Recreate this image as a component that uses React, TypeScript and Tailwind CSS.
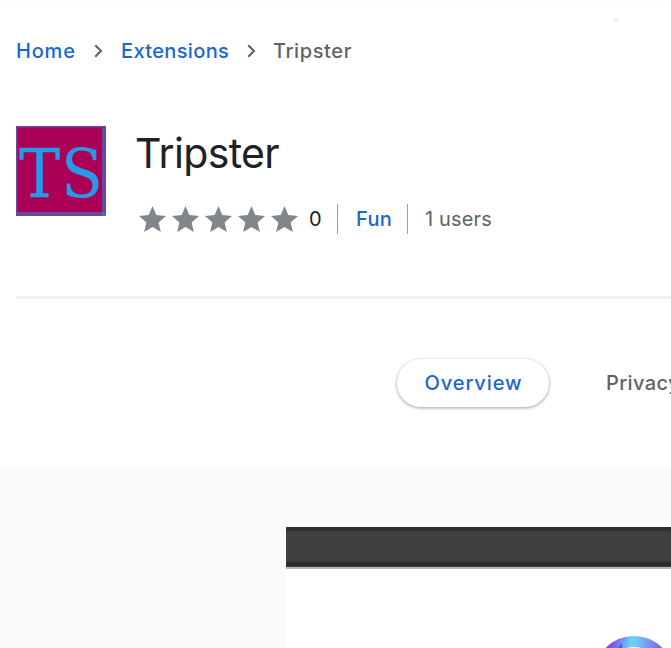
import React from "react";

const Chevron = () => (
  <svg className="h-[14px] w-[9px] shrink-0" viewBox="0 0 9 14" fill="none" stroke="#5f6368" strokeWidth="2.1">
    <path d="M1.2 1.2 7 7l-5.8 5.8" />
  </svg>
);

const Star = () => (
  <svg className="h-[26px] w-[27px] shrink-0" viewBox="2 2 20 19" preserveAspectRatio="none" fill="#80868b">
    <path d="M12 17.27L18.18 21l-1.64-7.03L22 9.24l-7.19-.61L12 2 9.19 8.63 2 9.24l5.46 4.73L5.82 21z" />
  </svg>
);

function Logo() {
  return (
    <svg className="h-[90px] w-[90px] shrink-0" viewBox="0 0 90 90">
      <rect width="90" height="90" fill="#664aa0" />
      <rect x="1.5" y="1.5" width="84.5" height="84.5" fill="#aa0055" />
      <rect x="86" y="86.5" width="4" height="3.5" fill="#4173c4" />
      <g fill="#2898e8" stroke="#2898e8" fontFamily="DejaVu Serif, serif" fontSize="68">
        <text x="3" y="71" textLength="41" lengthAdjust="spacingAndGlyphs" strokeWidth="0.5">T</text>
        <text x="45" y="71" textLength="42" lengthAdjust="spacingAndGlyphs" strokeWidth="0">S</text>
      </g>
    </svg>
  );
}

export default function App() {
  return (
    <div className="h-[648px] w-full overflow-hidden bg-white font-['Inter',sans-serif] text-[20px] whitespace-nowrap">
      <div className="flex h-[40px] justify-end border-t-2 border-[#fdfdfd] pt-4 pr-[53px]">
        <span className="h-1 w-1 bg-[#efefef]" />
      </div>
      <nav className="flex h-[22px] items-center pl-4 font-medium text-[#1967d2]">
        <span className="w-[78px] tracking-[0.8px]">Home</span>
        <Chevron />
        <span className="ml-[18px] w-[126px] tracking-[0.35px]">Extensions</span>
        <Chevron />
        <span className="ml-[17px] tracking-[0.6px] text-[#5f6368]">Tripster</span>
      </nav>
      <header className="mt-16 flex h-[170px] pl-4">
        <Logo />
        <div className="ml-[29px]">
          <h1 className="flex h-[54px] items-center pt-px text-[41px] tracking-[-0.65px] text-[#202124]">Tripster</h1>
          <div className="mt-6 flex h-[30px] items-center">
            <div className="flex gap-[6px] pl-1">
              <Star /><Star /><Star /><Star /><Star />
            </div>
            <span className="ml-[11px] w-[28px] text-[#202124]">0</span>
            <span className="flex h-[30px] w-[70px] items-center border-l border-[#9aa0a6] pl-[18px] font-medium tracking-[0.3px] text-[#1967d2]">Fun</span>
            <span className="flex h-[30px] items-center border-l border-[#9aa0a6] pl-[17px] tracking-[0.15px] text-[#5f6368]">1 users</span>
          </div>
        </div>
      </header>
      <div className="ml-4 h-[3px] bg-[#f1f3f4]" />
      <div className="flex h-[168px] pt-[60px] pl-[397px] font-medium tracking-[0.9px]">
        <button className="flex h-12 w-[152px] shrink-0 items-center justify-center rounded-full bg-white pl-px text-[#1967d2] shadow-[0_1px_3px_1px_rgba(60,64,67,0.15),0_1px_3px_rgba(60,64,67,0.3)]">Overview</button>
        <span className="ml-[57px] flex h-12 items-center tracking-[0.4px] text-[#5f6368]">Privacy</span>
      </div>
      <main className="h-[181px] bg-[#fafafa] pt-[60px] pl-[286px]">
        <div className="h-[121px] overflow-hidden bg-white">
          <div className="h-[42px] border-b-2 border-[#b8b4b6] bg-[linear-gradient(#2b2b2b_0px,#303030_3px,#404040_5px,#404040_34px,#2b2b2b_36px,#292929_39px,#5b5759_40px)]" />
          <svg className="mt-[66px] ml-[308px] h-[82px] w-[82px]" viewBox="0 0 82 82">
            <defs>
              <linearGradient id="ring" x1="0" y1="0" x2="1" y2="0.2">
                <stop offset="0" stopColor="#7a2be8" />
                <stop offset=".18" stopColor="#8a4cf2" />
                <stop offset=".3" stopColor="#6c8ff4" />
                <stop offset=".45" stopColor="#6cd4f4" />
                <stop offset=".6" stopColor="#72b2f6" />
                <stop offset=".8" stopColor="#7a78f6" />
                <stop offset="1" stopColor="#7547e8" />
              </linearGradient>
            </defs>
            <circle cx="40" cy="40.5" r="34" fill="none" stroke="url(#ring)" strokeWidth="11" />
            <path d="M23 14l5-6 0 6z" fill="#5653cc" />
          </svg>
        </div>
      </main>
    </div>
  );
}
